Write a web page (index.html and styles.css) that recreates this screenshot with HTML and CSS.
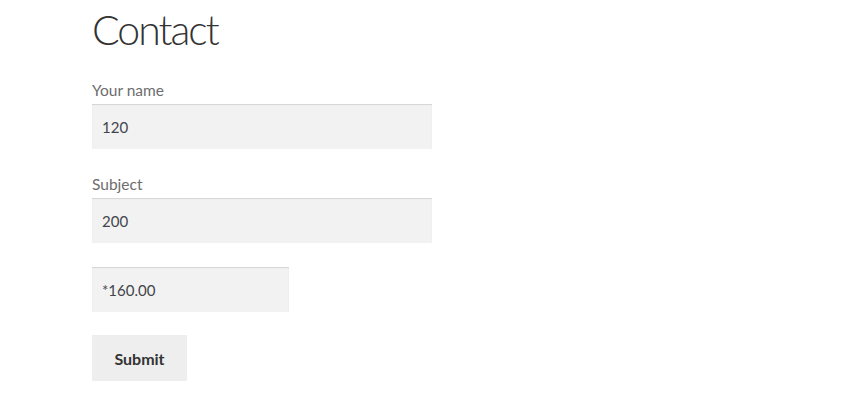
FILE: index.html
```html
<!DOCTYPE html>
<html>
<head>
<meta charset="utf-8">
<link rel="stylesheet" href="styles.css">
</head>
<body>
<main class="page">
  <h1 class="title">Contact</h1>
  <form class="form">
    <div class="field">
      <label class="label">Your name</label>
      <div class="input input-wide">120</div>
    </div>
    <div class="field">
      <label class="label">Subject</label>
      <div class="input input-wide">200</div>
    </div>
    <div class="field field-nolabel">
      <div class="input input-narrow">*160.00</div>
    </div>
    <div class="actions">
      <button type="button" class="button">Submit</button>
    </div>
  </form>
</main>
</body>
</html>
```
FILE: styles.css
```css
html, body {
  margin: 0;
  padding: 0;
  background: #ffffff;
}
body {
  font-family: Lato, "Liberation Sans", sans-serif;
  color: #43454b;
}
.page {
  padding: 10px 0 0 92px;
}
.title {
  margin: 0 0 29px 0;
  font-size: 41px;
  font-weight: 300;
  line-height: 40px;
  color: #333333;
  letter-spacing: -2px;
}
.form {
  display: flex;
  flex-direction: column;
  align-items: flex-start;
}
.field {
  display: flex;
  flex-direction: column;
  margin-bottom: 24px;
}
.field-nolabel {
  margin-bottom: 23px;
}
.label {
  font-size: 15.5px;
  line-height: 22px;
  color: #6d6d6d;
  margin-bottom: 3px;
}
.input {
  box-sizing: border-box;
  height: 45px;
  padding: 0 10px;
  display: flex;
  align-items: center;
  background: #f2f2f2;
  box-shadow: inset 0 1px 1px rgba(0,0,0,0.125);
  font-size: 15px;
  color: #43454b;
}
.input-wide {
  width: 340px;
}
.input-narrow {
  width: 197px;
}
.button {
  box-sizing: border-box;
  width: 95px;
  height: 46px;
  border: 0;
  background: #eeeeee;
  font-family: Lato, "Liberation Sans", sans-serif;
  font-weight: 700;
  font-size: 16px;
  color: #333333;
  padding: 0;
}
```
